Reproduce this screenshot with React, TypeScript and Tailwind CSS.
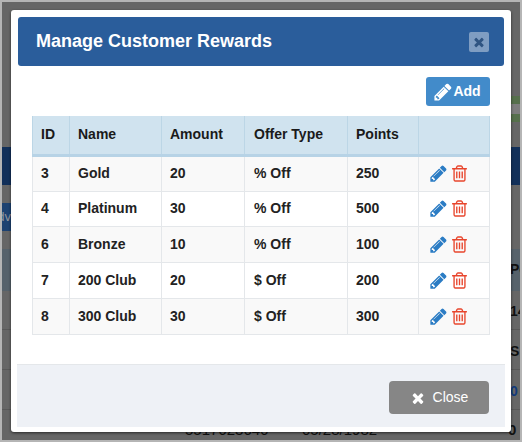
import React from "react";

const rewards = [
  { id: 3, name: "Gold", amount: 20, offer: "% Off", points: 250 },
  { id: 4, name: "Platinum", amount: 30, offer: "% Off", points: 500 },
  { id: 6, name: "Bronze", amount: 10, offer: "% Off", points: 100 },
  { id: 7, name: "200 Club", amount: 20, offer: "$ Off", points: 200 },
  { id: 8, name: "300 Club", amount: 30, offer: "$ Off", points: 300 },
];

const headers = ["ID", "Name", "Amount", "Offer Type", "Points", ""];

const PencilIcon = ({ className }: { className: string }) => (
  <svg viewBox="0 0 1792 1792" fill="currentColor" className={className}>
    <path d="M491 1536l91-91-235-235-91 91v107h128v128h107zm523-928q0-22-22-22-10 0-17 7l-542 542q-7 7-7 17 0 22 22 22 10 0 17-7l542-542q7-7 7-17zm-54-192l416 416-832 832h-416v-416zm683 96q0 53-37 90l-166 166-416-416 166-165q36-38 90-38 53 0 91 38l235 234q37 39 37 91z" />
  </svg>
);

const TrashIcon = ({ className }: { className: string }) => (
  <svg viewBox="0 0 1792 1792" fill="currentColor" className={className}>
    <path d="M704 736v576q0 14-9 23t-23 9h-64q-14 0-23-9t-9-23v-576q0-14 9-23t23-9h64q14 0 23 9t9 23zm256 0v576q0 14-9 23t-23 9h-64q-14 0-23-9t-9-23v-576q0-14 9-23t23-9h64q14 0 23 9t9 23zm256 0v576q0 14-9 23t-23 9h-64q-14 0-23-9t-9-23v-576q0-14 9-23t23-9h64q14 0 23 9t9 23zm128 724v-948h-896v948q0 22 7 40.5t14.5 27 10.5 8.5h832q3 0 10.5-8.5t14.5-27 7-40.5zm-672-1076h448l-48-117q-7-9-17-11h-317q-10 2-17 11zm928 32v64q0 14-9 23t-23 9h-96v948q0 83-47 143.5t-113 60.5h-832q-66 0-113-58.5t-47-141.5v-952h-96q-14 0-23-9t-9-23v-64q0-14 9-23t23-9h309l70-167q15-37 54-63t79-26h320q40 0 79 26t54 63l70 167h309q14 0 23 9t9 23z" />
  </svg>
);

const TimesIcon = ({ className }: { className: string }) => (
  <svg viewBox="0 0 1792 1792" fill="currentColor" className={className}>
    <path d="M1490 1322q0 40-28 68l-136 136q-28 28-68 28t-68-28l-294-294-294 294q-28 28-68 28t-68-28l-136-136q-28-28-28-68t28-68l294-294-294-294q-28-28-28-68t28-68l136-136q28-28 68-28t68 28l294 294 294-294q28-28 68-28t68 28l136 136q28 28 28 68t-28 68l-294 294 294 294q28 28 28 68z" />
  </svg>
);

// dimmed page that sits behind the dialog, only its edges show
const BackgroundPage = () => (
  <div className="flex h-full w-full flex-col bg-[#666666] text-[14px] font-bold text-[#111]">
    <div className="h-[94px]" />
    <div className="flex h-[27px] justify-end">
      <div className="flex h-full w-[20px] items-center bg-[#56704c]">
        <div className="h-[10px] w-full bg-[#7d7d7d]" />
      </div>
    </div>
    <div className="h-[25px]" />
    <div className="h-[38px] bg-[#12305a]" />
    <div className="h-[18px]" />
    <div className="flex h-[28px] w-[60px] items-center overflow-hidden bg-[#1d4271] text-[13px] font-normal text-[#8f949c]">
      <span className="w-[9px] shrink-0 overflow-hidden whitespace-nowrap" dir="rtl">dv</span>
    </div>
    <div className="h-[18px]" />
    <div className="flex h-[42px] items-center justify-end bg-[#56626b]">
      <span className="w-[10px] overflow-hidden whitespace-nowrap">Po</span>
    </div>
    <div className="flex h-[40px] items-center justify-end border-b border-[#585858] pt-[4px]">
      <span className="w-[10px] overflow-hidden whitespace-nowrap">14</span>
    </div>
    <div className="flex h-[40px] items-center justify-end border-b border-[#585858] pt-[4px]">
      <span className="w-[10px] overflow-hidden whitespace-nowrap">S</span>
    </div>
    <div className="flex h-[40px] items-center justify-end border-b border-[#585858] pt-[4px]">
      <span className="w-[10px] overflow-hidden whitespace-nowrap text-[#123a7a]">0</span>
    </div>
    <div className="flex h-[30px] pl-[183px] pt-[9px] text-[15px] font-normal">
      <span className="w-[117px]">5517623646</span>
      <span className="w-[206px]">05/28/1982</span>
      <span className="font-bold">0</span>
    </div>
  </div>
);

export default function App() {
  return (
    <div className="relative h-[442px] w-[522px] overflow-hidden border-2 border-[#b5b5b5] font-['Liberation_Sans',sans-serif]">
      <BackgroundPage />

      <div className="absolute left-[9px] top-[8px] flex h-[422px] w-[500px] flex-col rounded-[3px] bg-white px-[7px] pb-[5px] pt-[7px] shadow-[0_1px_3px_rgba(0,0,0,0.6)]">
        <div className="flex h-[49px] items-center justify-between rounded-[3px] bg-[#2a5d9b] pl-[18px] pr-[15px]">
          <h4 className="text-[18px] font-bold text-white">Manage Customer Rewards</h4>
          <button className="flex h-[20px] w-[20px] items-center justify-center rounded-[2px] bg-[#7f9dc2] text-[#2f5482]">
            <TimesIcon className="h-[14px] w-[14px]" />
          </button>
        </div>

        <div className="flex flex-1 flex-col px-[14px] pt-[11px]">
          <div className="flex justify-end">
            <button className="flex h-[29px] w-[64px] items-center justify-center rounded-[3px] bg-[#428bca] pr-[2px] text-[14px] font-bold text-white">
              <PencilIcon className="h-[20px] w-[20px]" />
              Add
            </button>
          </div>

          <table className="mt-[10px] w-[457px] table-fixed border-collapse text-[14px] font-bold text-[#222]">
            <colgroup>
              <col className="w-[37px]" />
              <col className="w-[92px]" />
              <col className="w-[83px]" />
              <col className="w-[103px]" />
              <col className="w-[71px]" />
              <col className="w-[71px]" />
            </colgroup>
            <thead>
              <tr className="h-[39px] border-b-[3px] border-[#b7d3e6] bg-[#d0e3ef]">
                {headers.map((h, i) => (
                  <th key={i} className={`border-x border-[#bcd6e6] text-left font-bold text-[#1a1a1a] ${i === 3 ? "pl-[9px]" : "pl-[8px]"}`}>
                    {h}
                  </th>
                ))}
              </tr>
            </thead>
            <tbody>
              {rewards.map((r, i) => (
                <tr key={r.id} className={`${i === 1 ? "h-[35px]" : "h-[36px]"} ${i % 2 === 0 ? "bg-[#f9f9f9]" : "bg-white"}`}>
                  <td className="border border-[#e4e7ea] pl-[8px]">{r.id}</td>
                  <td className="border border-[#e4e7ea] pl-[8px]">{r.name}</td>
                  <td className="border border-[#e4e7ea] pl-[8px]">{r.amount}</td>
                  <td className="border border-[#e4e7ea] pl-[9px]">{r.offer}</td>
                  <td className="border border-[#e4e7ea] pl-[8px]">{r.points}</td>
                  <td className="border border-[#e4e7ea] pl-[10px]">
                    <div className="flex items-center gap-[2px]">
                      <PencilIcon className="h-[19px] w-[19px] text-[#2b7cc4]" />
                      <TrashIcon className="h-[19px] w-[19px] text-[#e8452c]" />
                    </div>
                  </td>
                </tr>
              ))}
            </tbody>
          </table>
        </div>

        <div className="-mx-px flex h-[63px] items-start justify-end border-t border-[#e4e7ea] bg-[#eef1f6] pr-[16px] pt-[16px]">
          <button className="flex h-[33px] w-[100px] items-center justify-center gap-[7px] rounded-[4px] bg-[#868686] text-[14px] text-white">
            <TimesIcon className="h-[16px] w-[16px]" />
            Close
          </button>
        </div>
      </div>
    </div>
  );
}
